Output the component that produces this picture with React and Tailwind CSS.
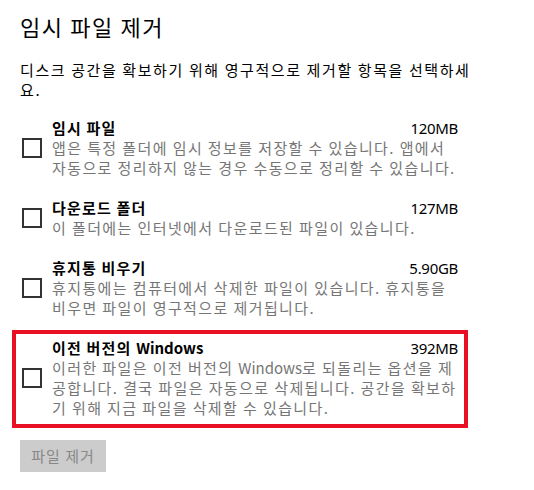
const W = <span className="tracking-normal">Windows</span>;

const items = [
  {
    title: "임시 파일",
    size: "120MB",
    lines: [
      "앱은 특정 폴더에 임시 정보를 저장할 수 있습니다. 앱에서",
      "자동으로 정리하지 않는 경우 수동으로 정리할 수 있습니다.",
    ],
  },
  {
    title: "다운로드 폴더",
    size: "127MB",
    lines: ["이 폴더에는 인터넷에서 다운로드된 파일이 있습니다."],
  },
  {
    title: "휴지통 비우기",
    size: "5.90GB",
    lines: [
      "휴지통에는 컴퓨터에서 삭제한 파일이 있습니다. 휴지통을",
      "비우면 파일이 영구적으로 제거됩니다.",
    ],
  },
  {
    title: <>이전 버전의 {W}</>,
    size: "392MB",
    highlight: true,
    lines: [
      <>이러한 파일은 이전 버전의 {W}로 되돌리는 옵션을 제</>,
      "공합니다. 결국 파일은 자동으로 삭제됩니다. 공간을 확보하",
      "기 위해 지금 파일을 삭제할 수 있습니다.",
    ],
  },
];

const font = "font-['Noto_Sans_CJK_KR','Noto_Sans',sans-serif]";

const Item = ({ item }) => (
  <div className="relative w-[438px] flex items-center gap-[10px]">
    {item.highlight && (
      <div className="absolute -top-2 -left-2 -right-[10px] -bottom-[10px] border-4 border-[#e81123] pointer-events-none" />
    )}
    <div className="ml-[2px] w-5 h-5 border-2 border-[#333333] shrink-0" />
    <div className="w-[406px]">
      <div className="flex justify-between leading-[20px] text-[15px] text-black">
        <span className="font-bold tracking-[1.2px]">{item.title}</span>
        <span className="font-['Noto_Sans',sans-serif] text-[15px] tracking-[-0.3px]">
          {item.size}
        </span>
      </div>
      {item.lines.map((line, i) => (
        <div
          key={i}
          className="leading-[20px] text-[15px] tracking-[1.4px] text-[#767676] whitespace-nowrap"
        >
          {line}
        </div>
      ))}
    </div>
  </div>
);

export default function App() {
  return (
    <div className={`w-[534px] h-[490px] bg-white pl-5 pt-[10px] ${font}`}>
      <h1 className="text-[22px] leading-[32px] tracking-[1.6px] text-black">
        임시 파일 제거
      </h1>
      <p className="mt-[18px] text-[15px] leading-[20px] tracking-[1.6px] text-black">
        디스크 공간을 확보하기 위해 영구적으로 제거할 항목을 선택하세
        <br />
        요.
      </p>
      <div className="mt-[18px] flex flex-col gap-5">
        {items.map((item, i) => (
          <Item key={i} item={item} />
        ))}
      </div>
      <button className="mt-[22px] w-[86px] h-8 bg-[#cccccc] text-[#888888] text-[15px] tracking-[1px]">
        파일 제거
      </button>
    </div>
  );
}
